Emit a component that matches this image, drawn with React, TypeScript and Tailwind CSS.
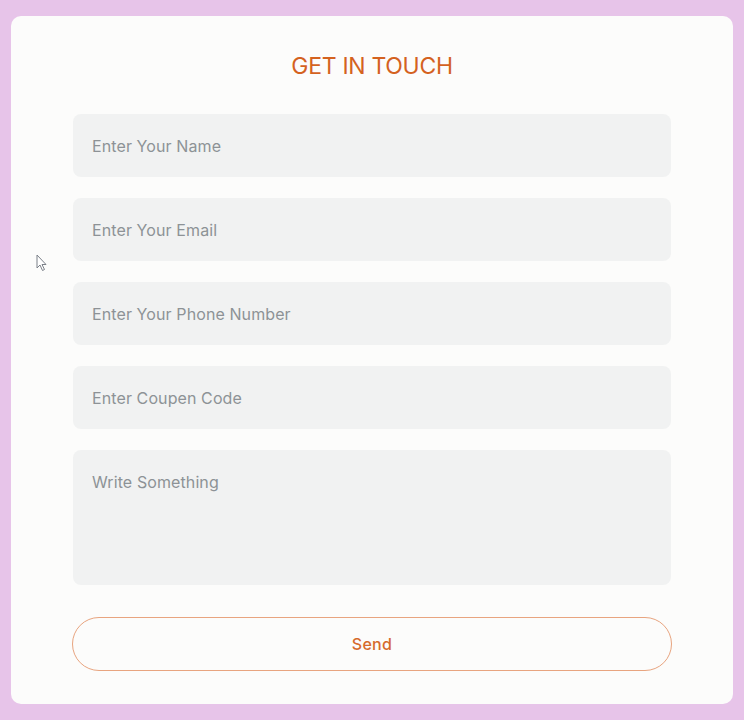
import React from "react";

export default function App() {
  const fields = [
    "Enter Your Name",
    "Enter Your Email",
    "Enter Your Phone Number",
    "Enter Coupen Code",
  ];
  return (
    <div
      className="w-[744px] h-[720px] bg-[#e7c4e9] pt-[16px] px-[11px] pb-[16px] relative"
      style={{ fontFamily: "Inter, 'Noto Sans', sans-serif" }}
    >
      <div className="w-[722px] h-[688px] bg-[#fcfcfb] rounded-[10px] flex flex-col items-center pt-[34px]">
        <h1 className="text-[23px] leading-[32px] text-[#d4621f] font-normal tracking-[-0.3px]">
          GET IN TOUCH
        </h1>
        <div className="w-[598px] mt-[32px] flex flex-col gap-[21px]">
          {fields.map((f) => (
            <input
              key={f}
              placeholder={f}
              className="h-[63px] w-full rounded-[8px] bg-[#f1f2f2] px-[19px] text-[16px] tracking-[0.1px] text-[#6b7075] placeholder:text-[#8d9296] outline-none"
            />
          ))}
          <textarea
            placeholder="Write Something"
            className="h-[135px] w-full rounded-[8px] bg-[#f1f2f2] px-[19px] pt-[20px] text-[16px] tracking-[0.1px] text-[#6b7075] placeholder:text-[#8d9296] outline-none resize-none"
          />
        </div>
        <button className="mt-[32px] w-[600px] h-[54px] rounded-full border border-[#e8a47f] text-[#d66a2b] text-[16px] font-medium bg-transparent tracking-[0.3px]">
          Send
        </button>
      </div>
      <svg
        className="absolute left-[36px] top-[254px]"
        width="12"
        height="18"
        viewBox="0 0 12 18"
      >
        <path
          d="M1 1 L1 14 L4 11 L6.5 16.5 L8.5 15.5 L6 10.5 L10 10.5 Z"
          fill="#fff"
          stroke="#7b8088"
          strokeWidth="1"
          strokeLinejoin="round"
        />
      </svg>
    </div>
  );
}
